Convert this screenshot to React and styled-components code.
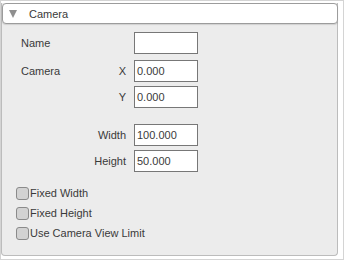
import styled, { createGlobalStyle } from "styled-components";

const GlobalStyle = createGlobalStyle`
  body {
    margin: 0;
    background: #ffffff;
    font-family: "Liberation Sans", Arial, sans-serif;
  }
`;

const Frame = styled.div`
  width: 344px;
  height: 260px;
  box-sizing: border-box;
  border: 1px solid #d4d4d4;
  padding: 2px 5px 3px 0;
  background: #fff;
`;

const Panel = styled.div`
  height: 100%;
  box-sizing: border-box;
  display: flex;
  flex-direction: column;
  background: #ececec;
  border: 1px solid #bcbcbc;
  border-top: none;
  border-radius: 0 0 4px 4px;
`;

const Header = styled.div`
  height: 21px;
  box-sizing: border-box;
  margin: 0 -1px 0 0;
  display: flex;
  align-items: center;
  background: #fff;
  border: 1px solid #9c9c9c;
  border-radius: 4px;
  box-shadow: 0 1px 1px rgba(0, 0, 0, 0.12);
  font-size: 11px;
  color: #3a3a3a;
`;

const Arrow = styled.span`
  width: 0;
  height: 0;
  margin: 1px 12px 0 6px;
  border-left: 4px solid transparent;
  border-right: 4px solid transparent;
  border-top: 8px solid #8f8f8f;
`;

const Body = styled.div`
  padding: 8px 0 0 14px;
`;

const Form = styled.div`
  display: flex;
  flex-direction: column;
  width: 177px;
  margin-left: 5px;
`;

const Row = styled.div`
  display: grid;
  grid-template-columns: 1fr auto 64px;
  column-gap: 8px;
  align-items: center;
  margin-top: ${(p) => p.$gap || 0}px;
  font-size: 11px;
  color: #3a3a3a;
`;

const SubLabel = styled.span`
  text-align: right;
`;

const Field = styled.div`
  height: 22px;
  box-sizing: border-box;
  border: 1px solid #777;
  background: #fff;
  padding: 0 2px;
  display: flex;
  align-items: center;
  font-size: 11px;
  color: #3a3a3a;
`;

const Checks = styled.div`
  display: flex;
  flex-direction: column;
  gap: 7px;
  margin-top: 15px;
`;

const CheckRow = styled.label`
  display: flex;
  align-items: center;
  font-size: 11px;
  color: #3a3a3a;
  line-height: 13px;
`;

const Box = styled.span`
  width: 13px;
  height: 13px;
  box-sizing: border-box;
  border: 1px solid #8a8a8a;
  border-radius: 3px;
  background: #d2d2d2;
  margin-right: 1px;
`;

const rows = [
  { label: "Name", sub: "", value: "", gap: 0 },
  { label: "Camera", sub: "X", value: "0.000", gap: 6 },
  { label: "", sub: "Y", value: "0.000", gap: 4 },
  { label: "", sub: "Width", value: "100.000", gap: 16 },
  { label: "", sub: "Height", value: "50.000", gap: 4 },
];

const checks = ["Fixed Width", "Fixed Height", "Use Camera View Limit"];

export default function App() {
  return (
    <>
      <GlobalStyle />
      <Frame>
        <Panel>
          <Header>
            <Arrow />
            Camera
          </Header>
          <Body>
            <Form>
              {rows.map((r, i) => (
                <Row key={i} $gap={r.gap}>
                  <span>{r.label}</span>
                  <SubLabel>{r.sub}</SubLabel>
                  <Field>{r.value}</Field>
                </Row>
              ))}
            </Form>
            <Checks>
              {checks.map((c) => (
                <CheckRow key={c}>
                  <Box />
                  {c}
                </CheckRow>
              ))}
            </Checks>
          </Body>
        </Panel>
      </Frame>
    </>
  );
}
